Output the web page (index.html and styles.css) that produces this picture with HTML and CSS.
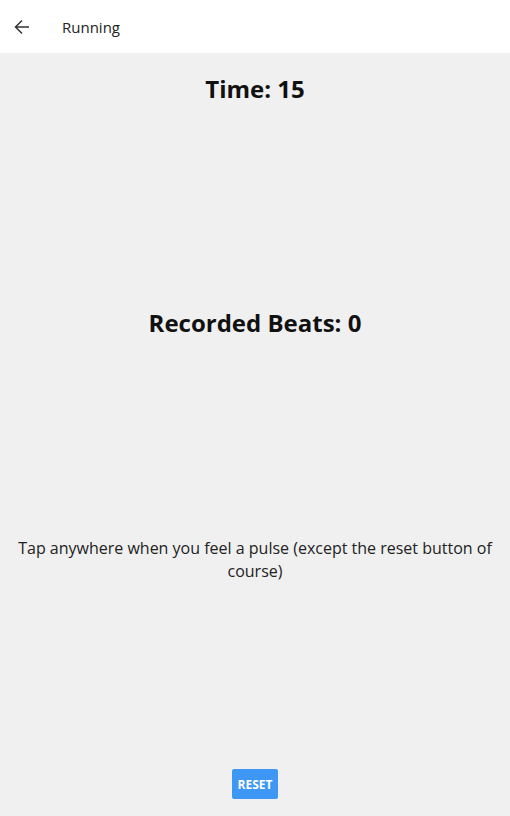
FILE: index.html
```html
<!DOCTYPE html>
<html>
<head>
<meta charset="utf-8">
<link rel="stylesheet" href="styles.css">
</head>
<body>
<header class="appbar">
  <button class="back" aria-label="Back">
    <svg width="16" height="16" viewBox="0 0 16 16"><path d="M15 8H1.8M8 1.5L1.5 8L8 14.5" fill="none" stroke="#333" stroke-width="1.5"/></svg>
  </button>
  <span class="title">Running</span>
</header>
<main class="screen">
  <h1 class="time">Time: 15</h1>
  <h1 class="beats">Recorded Beats: 0</h1>
  <p class="hint">Tap anywhere when you feel a pulse (except the reset button of course)</p>
  <button class="reset">RESET</button>
</main>
</body>
</html>
```
FILE: styles.css
```css
html, body {
  margin: 0;
  padding: 0;
  height: 100%;
}
body {
  font-family: "Open Sans", "Noto Sans", sans-serif;
  background: #f0f0f0;
  color: #111;
  display: flex;
  flex-direction: column;
}
.appbar {
  height: 53px;
  background: #fff;
  display: flex;
  align-items: center;
  flex-shrink: 0;
}
.back {
  border: 0;
  background: none;
  padding: 0;
  margin-left: 14px;
  width: 16px;
  height: 16px;
  display: flex;
}
.title {
  margin-left: 32px;
  font-size: 15px;
  color: #222;
}
.screen {
  flex: 1;
  display: flex;
  flex-direction: column;
  align-items: center;
}
.time {
  margin: 20px 0 0;
  font-size: 24px;
  line-height: 32px;
  font-weight: 700;
}
.beats {
  margin: 202px 0 0;
  font-size: 24px;
  line-height: 32px;
  font-weight: 700;
}
.hint {
  margin: 198px 0 0;
  padding: 0 14px;
  text-align: center;
  font-size: 16px;
  line-height: 23px;
  color: #222;
}
.reset {
  margin-top: auto;
  margin-bottom: 17px;
  width: 46px;
  height: 30px;
  border: 0;
  border-radius: 2px;
  background: #3f97f5;
  color: #fff;
  font-family: inherit;
  font-weight: 700;
  font-size: 12px;
  padding: 0;
}
```
